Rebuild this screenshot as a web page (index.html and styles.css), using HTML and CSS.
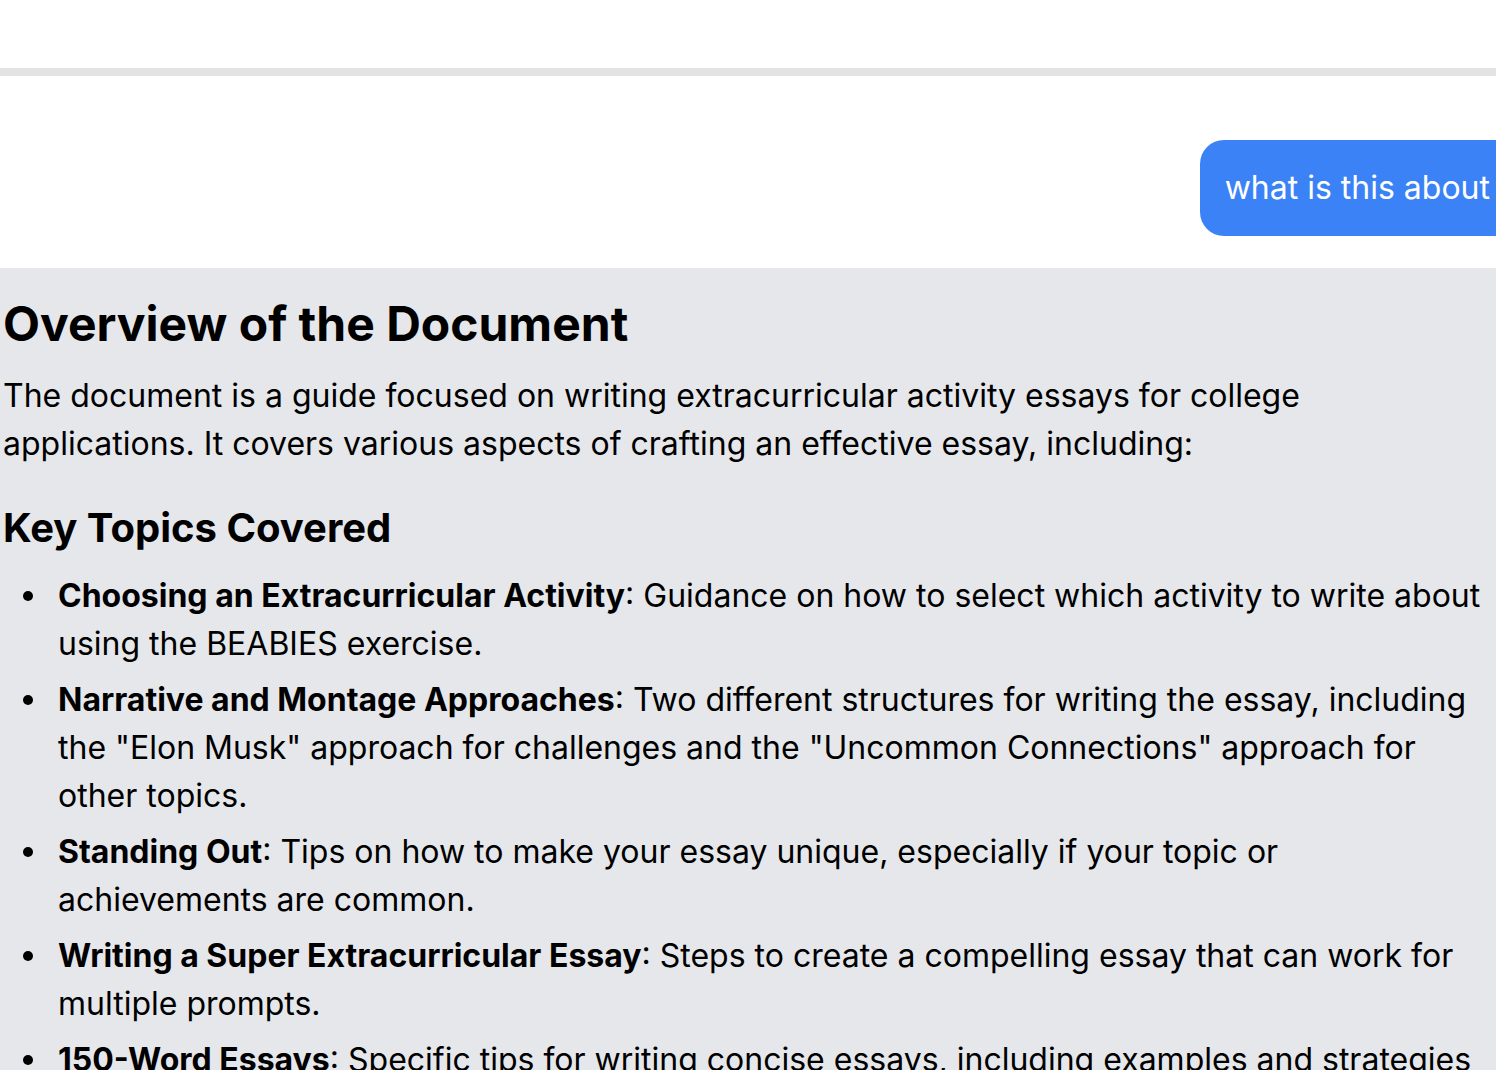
FILE: index.html
```html
<!DOCTYPE html>
<html>
<head>
    <title>Chat</title>
    <link rel="stylesheet" href="styles.css">
</head>
<body>
    <div class="top-bar"></div>
    <div class="divider"></div>

    <div class="chat">
        <div class="user-row">
            <div class="user-bubble">what is this about</div>
        </div>

        <div class="answer">
            <h1>Overview of the Document</h1>
            <p>The document is a guide focused on writing extracurricular activity essays for college applications. It covers various aspects of crafting an effective essay, including:</p>

            <h2>Key Topics Covered</h2>
            <ul>
                <li><strong>Choosing an Extracurricular Activity</strong>: Guidance on how to select which activity to write about using the BEABIES exercise.</li>
                <li><strong>Narrative and Montage Approaches</strong>: Two different structures for writing the essay, including the "Elon Musk" approach for challenges and the "Uncommon Connections" approach for other topics.</li>
                <li><strong>Standing Out</strong>: Tips on how to make your essay unique, especially if your topic or achievements are common.</li>
                <li><strong>Writing a Super Extracurricular Essay</strong>: Steps to create a compelling essay that can work for multiple prompts.</li>
                <li><strong>150-Word Essays</strong>: Specific tips for writing concise essays, including examples and strategies for making every word count.</li>
            </ul>
        </div>
    </div>
</body>
</html>
```

FILE: styles.css
```css
body {
    font-family: Inter, 'Noto Sans', sans-serif;
    background-color: #ffffff;
    color: #000000;
    margin: 0;
    font-size: 32px;
    line-height: 48px;
    overflow: hidden;
}

.top-bar {
    height: 68px;
    background-color: #ffffff;
}

.divider {
    height: 8px;
    background-color: #e4e4e4;
}

.chat {
    display: flex;
    flex-direction: column;
    gap: 32px;
}

.user-row {
    display: flex;
    justify-content: flex-end;
    padding-top: 64px;
}

.user-bubble {
    background-color: #3b82f6;
    color: #ffffff;
    padding: 24px 6px 24px 25px;
    border-radius: 24px 0 0 24px;
}

.answer {
    background-color: #e5e7eb;
    padding: 27px 12px 0 3px;
}

.answer h1 {
    font-size: 48px;
    line-height: 58px;
    font-weight: 700;
    margin: 0 0 19px;
}

.answer p {
    margin: 0 0 36px;
}

.answer h2 {
    font-size: 40px;
    line-height: 48px;
    font-weight: 700;
    margin: 0 0 20px;
}

.answer ul {
    margin: 0;
    padding-left: 55px;
    list-style: none;
}

.answer li {
    position: relative;
    margin-bottom: 8px;
}

/* round bullet, a bit larger than the font's own */
.answer li::before {
    content: '';
    position: absolute;
    left: -35px;
    top: 19px;
    width: 10px;
    height: 10px;
    border-radius: 50%;
    background-color: #000000;
}

.answer strong {
    font-weight: 700;
}
```
